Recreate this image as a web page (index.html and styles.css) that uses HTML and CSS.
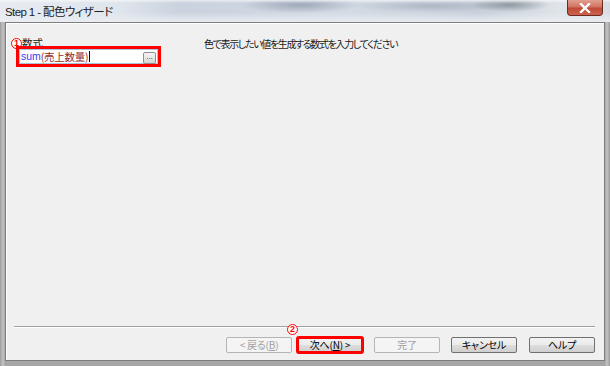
FILE: index.html
```html
<!DOCTYPE html>
<html lang="ja">
<head>
    <meta charset="utf-8">
    <title>Step 1 - 配色ウィザード</title>
    <link rel="stylesheet" href="styles.css">
</head>
<body>
<div class="window">
    <div class="titlebar">
        <span class="title">Step 1 - 配色ウィザード</span>
        <button class="close" type="button" aria-label="閉じる">
            <svg viewBox="0 0 12 10" width="12" height="10">
                <path d="M2 1 L10 9 M10 1 L2 9" stroke="#fff" stroke-width="2.4" stroke-linecap="square"/>
            </svg>
        </button>
    </div>
    <div class="frame">
        <div class="client">
            <div class="content">
                <div class="field">
                    <label class="field-label" for="formula">数式</label>
                    <span class="marker marker-one">1</span>
                    <div class="formula highlight" id="formula">
                        <span class="fn">sum</span><span class="arg">(売上数量)</span><span class="caret"></span>
                        <span class="browse">...</span>
                    </div>
                </div>
                <p class="hint">色で表示したい値を生成する数式を入力してください</p>
            </div>
            <div class="footer">
                <div class="buttons">
                    <div class="pair">
                        <button type="button" class="btn" disabled>&lt; 戻る(<u>B</u>)</button>
                        <div class="next-wrap">
                            <span class="marker marker-two">2</span>
                            <button type="button" class="btn highlight">次へ(<u>N</u>) &gt;</button>
                        </div>
                    </div>
                    <button type="button" class="btn" disabled>完了</button>
                    <button type="button" class="btn">キャンセル</button>
                    <button type="button" class="btn">ヘルプ</button>
                </div>
            </div>
        </div>
    </div>
</div>
</body>
</html>
```

FILE: styles.css
```css
/* Window frame */
html, body {
    margin: 0;
    padding: 0;
    background: #fff;
}
.window {
    position: relative;
    width: 610px;
    height: 366px;
    display: flex;
    flex-direction: column;
    font-family: "Noto Sans CJK JP", "Liberation Sans", sans-serif;
    font-feature-settings: "palt";
    color: #1a1a1a;
    background: linear-gradient(to right, #9c9c9c 0, #c4c4c4 3px, #a6a6a6 5px, #a6a6a6 605px, #c4c4c4 607px, #9c9c9c 610px);
}
.titlebar {
    height: 22px;
    display: flex;
    align-items: center;
    padding-left: 5px;
    background:
        linear-gradient(to bottom, rgba(255,255,255,0.6) 0, rgba(255,255,255,0) 3px),
        linear-gradient(to bottom, rgba(255,255,255,0) 55%, rgba(235,238,242,0.9) 100%),
        radial-gradient(ellipse 60px 8px at 300px 5px, rgba(120,130,150,0.55), rgba(120,130,150,0)),
        radial-gradient(ellipse 40px 7px at 510px 5px, rgba(80,90,100,0.5), rgba(80,90,100,0)),
        radial-gradient(ellipse 80px 6px at 430px 6px, rgba(130,140,160,0.4), rgba(130,140,160,0)),
        linear-gradient(to right, #e6ebf1 0, #dfe5ec 120px, #c9d2de 180px, #d2dae4 350px, #c7cfd9 480px, #dfe4ea 560px, #d8dde4 610px);
}
.title {
    font-family: "Liberation Sans", "Noto Sans CJK JP", sans-serif;
    font-size: 11.5px;
    color: #222;
    letter-spacing: -0.6px;
}
.close {
    position: absolute;
    top: 0;
    right: 7px;
    width: 36px;
    height: 16px;
    padding: 0;
    border: 1px solid #6e2a20;
    border-top: none;
    border-radius: 0 0 4px 4px;
    background: linear-gradient(to bottom, #e2a08f 0, #cf7462 45%, #bf4a35 55%, #cd6450 100%);
    display: flex;
    align-items: center;
    justify-content: center;
}
.frame {
    flex: 1;
    display: flex;
    padding: 0 5px 5px 5px;
}
.client {
    flex: 1;
    display: flex;
    flex-direction: column;
    background: #f0f0f0;
    border: 1px solid #7d7d7d;
    box-shadow: inset 1px 1px 0 #ffffff;
}

/* Step content */
.content {
    flex: 1;
    display: grid;
    grid-template-columns: 198px 1fr;
    align-items: start;
    padding-top: 13px;
}
.field {
    position: relative;
    padding-left: 13px;
}
.field-label {
    display: block;
    padding-left: 3px;
    font-size: 10.5px;
    line-height: 13px;
    height: 13px;
}
.formula {
    position: relative;
    display: flex;
    align-items: center;
    box-sizing: border-box;
    width: 139px;
    height: 15px;
    padding-left: 1px;
    background: #fff;
    border: 1px solid #a9c5dd;
    font-size: 10.5px;
    line-height: 15px;
}
.fn {
    color: #3b3bf0;
    font-family: "Liberation Sans", sans-serif;
    font-size: 10.5px;
}
.arg {
    color: #962a2a;
    letter-spacing: -0.3px;
}
.caret {
    width: 1px;
    height: 11px;
    margin-left: 1px;
    background: #000;
}
.browse {
    position: absolute;
    right: 1px;
    top: 2px;
    width: 11px;
    height: 10px;
    border: 1px solid #8e8f8f;
    border-radius: 2px;
    background: linear-gradient(to bottom, #f6f6f6, #d6d6d6);
    font-size: 8px;
    line-height: 8px;
    text-align: center;
    color: #333;
    font-family: "Liberation Sans", sans-serif;
}
.hint {
    margin: 1px 0 0;
    font-size: 10px;
    line-height: 13px;
    letter-spacing: -1.35px;
}

/* Highlight annotations */
.highlight {
    outline: 3px solid #ff0000;
    outline-offset: 0;
}
.btn.highlight {
    outline-offset: -2px;
}
.marker {
    position: absolute;
    width: 9px;
    height: 9px;
    border: 1px solid #ff0000;
    border-radius: 50%;
    background: #fff;
    color: #ff0000;
    font-family: "Liberation Sans", sans-serif;
    font-size: 9px;
    font-weight: bold;
    line-height: 9px;
    text-align: center;
}
.marker-one {
    left: 5px;
    top: 2px;
}
.marker-two {
    left: -9px;
    top: -13px;
}

/* Footer buttons */
.footer {
    margin: 0 9px 0 8px;
    padding: 10px 0 7px;
    border-top: 1px solid #a0a0a0;
    box-shadow: inset 0 1px 0 #fff;
}
.buttons {
    display: flex;
    justify-content: flex-end;
    gap: 11px;
}
.pair {
    display: flex;
    gap: 4px;
}
.next-wrap {
    position: relative;
    display: flex;
}
.btn {
    width: 66px;
    height: 16px;
    padding: 0;
    border: 1px solid #707070;
    border-radius: 2px;
    background: linear-gradient(to bottom, #f2f2f2 0, #ebebeb 48%, #dddddd 52%, #cfcfcf 100%);
    font-family: "Noto Sans CJK JP", sans-serif;
    font-feature-settings: "palt";
    font-size: 10px;
    line-height: 14px;
    color: #000;
    letter-spacing: -0.2px;
}
.btn:last-child {
    margin-left: 1px;
}
.btn u {
    text-decoration: underline;
}
.btn:disabled {
    border-color: #b5b5b5;
    background: #f4f4f4;
    color: #a0a0a0;
}
```
